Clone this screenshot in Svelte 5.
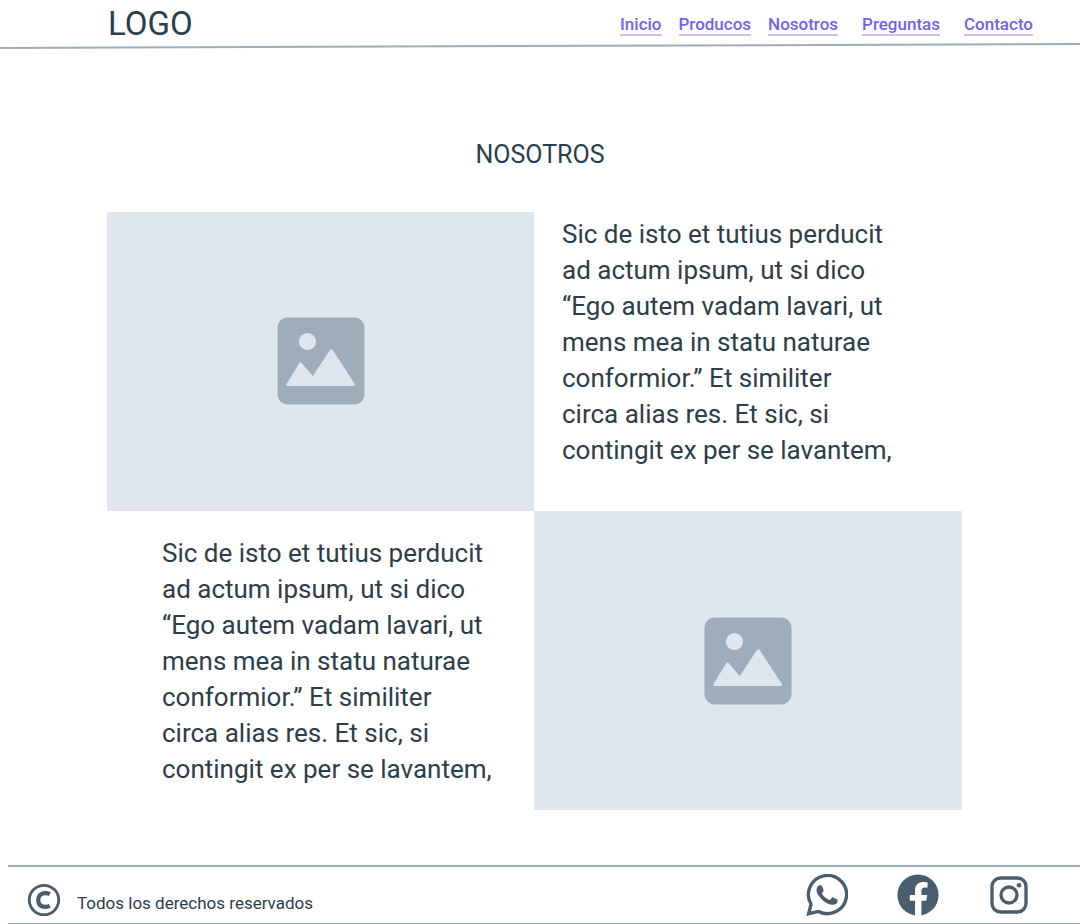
<script>
  const groups = [['Inicio', 'Producos', 'Nosotros'], ['Preguntas'], ['Contacto']];
  const text = [
    'Sic de isto et tutius perducit',
    'ad actum ipsum, ut si dico',
    '“Ego autem vadam lavari, ut',
    'mens mea in statu naturae',
    'conformior.” Et similiter',
    'circa alias res. Et sic, si',
    'contingit ex per se lavantem,'
  ].join('\n');
</script>

{#snippet placeholder()}
  <div class="picture">
    <svg viewBox="0 0 88 88" role="img" aria-label="Imagen">
      <rect x="0.5" y="0.5" width="87" height="87" rx="10" fill="#9eadb9" />
      <circle cx="30.500" cy="24.500" r="8.600" fill="#dfe6ee" />
      <path
        d="M11 69Q8.500 69 9.800 66.500L22 46.500Q23.500 44.500 25 46.500L35.800 59L52.500 33.500Q54.300 31 56 33.500L77.500 66.500Q79 69 76.500 69Z"
        fill="#dfe6ee"
      />
    </svg>
  </div>
{/snippet}

<div class="page">
  <header>
    <div class="bar">
      <a class="logo" href="#inicio">LOGO</a>
      <nav>
        {#each groups as group}
          <div class="group">
            {#each group as link}
              <a href={'#' + link.toLowerCase()}>{link}</a>
            {/each}
          </div>
        {/each}
      </nav>
    </div>
    <svg class="rule" viewBox="0 0 1080 8" preserveAspectRatio="none" aria-hidden="true">
      <path d="M0 6L1080 2" stroke="#9eadb9" stroke-width="2" />
    </svg>
  </header>

  <main>
    <h1>NOSOTROS</h1>
    <div class="grid">
      {@render placeholder()}
      <div class="copy"><p>{text}</p></div>
      <div class="copy second"><p>{text}</p></div>
      {@render placeholder()}
    </div>
  </main>

  <footer>
    <div class="rights">
      <svg width="34" height="34" viewBox="0 0 34 34" fill="none" stroke="#495d6c" aria-hidden="true">
        <circle cx="17" cy="17" r="14.700" stroke-width="2.800" />
        <path d="M22.800 11.200C21.500 10.400 20.200 10.100 18.700 10.100C14 10.100 11.200 12.400 11.200 17C11.200 21.600 14 23.900 18.700 23.900C20.200 23.900 21.500 23.600 22.800 22.800" stroke-width="4.200" />
      </svg>
      <span>Todos los derechos reservados</span>
    </div>
    <div class="social">
      <a href="#whatsapp" aria-label="WhatsApp">
        <svg width="42" height="42" viewBox="0 0 24 24" fill="#495d6c">
          <path d="M17.472 14.382c-.297-.149-1.758-.867-2.030-.967-.273-.099-.471-.148-.670.150-.197.297-.767.966-.940 1.164-.173.199-.347.223-.644.075-.297-.150-1.255-.463-2.390-1.475-.883-.788-1.480-1.761-1.653-2.059-.173-.297-.018-.458.130-.606.134-.133.298-.347.446-.520.149-.174.198-.298.298-.497.099-.198.050-.371-.025-.520-.075-.149-.669-1.612-.916-2.207-.242-.579-.487-.500-.669-.510-.173-.008-.371-.010-.570-.010-.198 0-.520.074-.792.372-.272.297-1.040 1.016-1.040 2.479 0 1.462 1.065 2.875 1.213 3.074.149.198 2.096 3.200 5.077 4.487.709.306 1.262.489 1.694.625.712.227 1.360.195 1.871.118.571-.085 1.758-.719 2.006-1.413.248-.694.248-1.289.173-1.413-.074-.124-.272-.198-.570-.347z" />
          <path d="M1.500 22.700L2.900 17.300A10.900 10.900 0 1 1 7.200 21.400Z" fill="none" stroke="#495d6c" stroke-width="1.900" stroke-linejoin="miter" />
        </svg>
      </a>
      <a href="#facebook" aria-label="Facebook">
        <svg width="42" height="42" viewBox="0 0 42 42">
          <circle cx="21" cy="21" r="20.600" fill="#495d6c" />
          <path d="M18 42V26.800H12.800V21H18V16.500C18 11 21.200 8 26.200 8Q28.500 8 30.600 8.500V13.500H27.900C25.300 13.500 24.400 15.100 24.400 17V21H30.200L29.300 26.800H24.400V42Z" fill="#fff" />
        </svg>
      </a>
      <a href="#instagram" aria-label="Instagram">
        <svg width="42" height="42" viewBox="0 0 42 42" fill="none" stroke="#495d6c" stroke-width="3.300">
          <rect x="4" y="4" width="34" height="34" rx="8.500" />
          <circle cx="21" cy="21" r="8" />
          <circle cx="31" cy="11.300" r="2.300" fill="#495d6c" stroke="none" />
        </svg>
      </a>
    </div>
  </footer>
</div>

<style>
  :global(body) {
    margin: 0;
    background: #fff;
  }
  .page {
    font-family: Roboto, 'Liberation Sans', sans-serif;
    color: #2c3d4b;
  }
  .bar {
    display: flex;
    justify-content: space-between;
    align-items: center;
    height: 42px;
    padding: 0 47px 0 108px;
  }
  .logo {
    padding-top: 6px;
    font-size: 33px;
    line-height: 36px;
    color: inherit;
    text-decoration: none;
  }
  nav {
    display: flex;
    gap: 24px;
    padding-top: 8px;
  }
  .group {
    display: flex;
    gap: 17px;
  }
  nav a {
    font-size: 17px;
    line-height: 20px;
    font-weight: 500;
    color: #7163ea;
    text-decoration: none;
    border-bottom: 2px solid #c7c2fb;
  }
  .rule {
    display: block;
    width: 100%;
    height: 8px;
  }
  main {
    padding: 87px 118px 55px 107px;
  }
  h1 {
    margin: 0 0 39px 11px;
    font-size: 25px;
    line-height: 36px;
    font-weight: 400;
    text-align: center;
  }
  .grid {
    display: grid;
    grid-template-columns: 427fr 428fr;
  }
  .picture {
    display: flex;
    align-items: center;
    justify-content: center;
    aspect-ratio: 10 / 7;
    background: #dfe6ee;
  }
  .picture svg {
    width: 88px;
    height: 88px;
  }
  .copy {
    padding: 4px 0 0 28px;
  }
  .second {
    padding: 24px 0 0 55px;
  }
  p {
    margin: 0;
    font-size: 26px;
    line-height: 36px;
    white-space: pre-line;
  }
  footer {
    display: flex;
    justify-content: space-between;
    align-items: center;
    margin-left: 8px;
    padding: 0 50px 0 19px;
    height: 56px;
    border-top: 2px solid #9eadb9;
    border-bottom: 1px solid #9eadb9;
  }
  .rights {
    display: flex;
    align-items: center;
    gap: 16px;
    padding-top: 10px;
    font-size: 17px;
    line-height: 20px;
  }
  .rights span {
    padding-top: 6px;
  }
  .social {
    display: flex;
    gap: 49px;
  }
  .social a {
    display: block;
  }
  .social svg {
    display: block;
  }
</style>
